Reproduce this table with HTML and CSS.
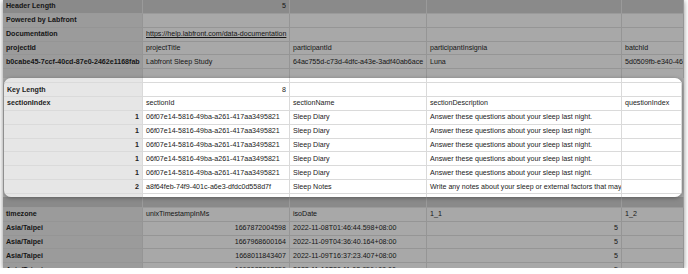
FILE: index.html
```html
<!DOCTYPE html>
<html>
<head>
<meta charset="utf-8">
<link rel="stylesheet" href="styles.css">
</head>
<body>
<div class="sheet">
  <div class="dim">
    <div class="row dark"><div class="c">Header Length</div><div class="c num">5</div><div class="c"></div><div class="c"></div><div class="c"></div></div>
    <div class="row"><div class="c">Powered by Labfront</div><div class="c"></div><div class="c"></div><div class="c"></div><div class="c"></div></div>
    <div class="row"><div class="c">Documentation</div><div class="c"><span class="link">https://help.labfront.com/data-documentation</span></div><div class="c"></div><div class="c"></div><div class="c"></div></div>
    <div class="row"><div class="c">projectId</div><div class="c">projectTitle</div><div class="c">participantId</div><div class="c">participantInsignia</div><div class="c">batchId</div></div>
    <div class="row"><div class="c">b0cabe45-7ccf-40cd-87e0-2462e1168fab</div><div class="c">Labfront Sleep Study</div><div class="c">64ac755d-c73d-4dfc-a43e-3adf40ab6ace</div><div class="c">Luna</div><div class="c">5d0509fb-e340-46</div></div>
    <div class="row split-top"><div class="c"></div><div class="c"></div><div class="c"></div><div class="c"></div><div class="c"></div></div>
  </div>

  <div class="card">
    <div class="row split-bottom"><div class="c"></div><div class="c"></div><div class="c"></div><div class="c"></div><div class="c"></div></div>
    <div class="row"><div class="c">Key Length</div><div class="c num">8</div><div class="c"></div><div class="c"></div><div class="c"></div></div>
    <div class="row"><div class="c">sectionIndex</div><div class="c">sectionId</div><div class="c">sectionName</div><div class="c">sectionDescription</div><div class="c">questionIndex</div></div>
    <div class="row"><div class="c num">1</div><div class="c">06f07e14-5816-49ba-a261-417aa3495821</div><div class="c">Sleep Diary</div><div class="c">Answer these questions about your sleep last night.</div><div class="c"></div></div>
    <div class="row"><div class="c num">1</div><div class="c">06f07e14-5816-49ba-a261-417aa3495821</div><div class="c">Sleep Diary</div><div class="c">Answer these questions about your sleep last night.</div><div class="c"></div></div>
    <div class="row"><div class="c num">1</div><div class="c">06f07e14-5816-49ba-a261-417aa3495821</div><div class="c">Sleep Diary</div><div class="c">Answer these questions about your sleep last night.</div><div class="c"></div></div>
    <div class="row"><div class="c num">1</div><div class="c">06f07e14-5816-49ba-a261-417aa3495821</div><div class="c">Sleep Diary</div><div class="c">Answer these questions about your sleep last night.</div><div class="c"></div></div>
    <div class="row"><div class="c num">1</div><div class="c">06f07e14-5816-49ba-a261-417aa3495821</div><div class="c">Sleep Diary</div><div class="c">Answer these questions about your sleep last night.</div><div class="c"></div></div>
    <div class="row"><div class="c num">2</div><div class="c">a8f64feb-74f9-401c-a6e3-dfdc0d558d7f</div><div class="c">Sleep Notes</div><div class="c">Write any notes about your sleep or external factors that may have affected it.</div><div class="c"></div></div>
    <div class="row split-tail"><div class="c"></div><div class="c"></div><div class="c"></div><div class="c"></div><div class="c"></div></div>
  </div>

  <div class="dim">
    <div class="row dark split-dark"><div class="c"></div><div class="c"></div><div class="c"></div><div class="c"></div><div class="c"></div></div>
    <div class="row"><div class="c">timezone</div><div class="c">unixTimestampInMs</div><div class="c">isoDate</div><div class="c">1_1</div><div class="c">1_2</div></div>
    <div class="row"><div class="c">Asia/Taipei</div><div class="c num">1667872004598</div><div class="c">2022-11-08T01:46:44.598+08:00</div><div class="c num">5</div><div class="c"></div></div>
    <div class="row"><div class="c">Asia/Taipei</div><div class="c num">1667968600164</div><div class="c">2022-11-09T04:36:40.164+08:00</div><div class="c num">5</div><div class="c"></div></div>
    <div class="row"><div class="c">Asia/Taipei</div><div class="c num">1668011843407</div><div class="c">2022-11-09T16:37:23.407+08:00</div><div class="c num">5</div><div class="c"></div></div>
    <div class="row"><div class="c">Asia/Taipei</div><div class="c num">1668082262856</div><div class="c">2022-11-10T20:11:02.856+08:00</div><div class="c num">5</div><div class="c"></div></div>
  </div>
</div>
</body>
</html>
```

FILE: styles.css
```css
html, body {
  margin: 0;
  background: #ffffff;
}

body {
  font-family: "Liberation Sans", Arial, sans-serif;
  font-size: 7.1px;
}

.sheet {
  margin-left: 3px;
  width: 681px;
  height: 268px;
  overflow: hidden;
  background: #a7a7a7;
  box-shadow: 0 1px 5px rgba(0, 0, 0, 0.45);
}

.dim {
  --cell: #a8a8a8;
  --colA: #9b9b9b;
  --line: #959595;
  --ink: #151515;
}

.dark {
  --cell: #8a8a8a;
  --colA: #8a8a8a;
  --line: #9a9a9a;
}

.row {
  display: grid;
  grid-template-columns: 140px 147px 137px 195px 1fr;
  height: 13.87px;
}

.c {
  box-sizing: border-box;
  min-width: 0;
  display: flex;
  align-items: center;
  padding: 0 3px;
  white-space: nowrap;
  overflow: hidden;
  background: var(--cell);
  color: var(--ink);
  border-right: 1px solid var(--line);
  border-bottom: 1px solid var(--line);
}

.c:first-child {
  background: var(--colA);
  font-weight: bold;
}

.num {
  justify-content: flex-end;
}

.link {
  text-decoration: underline;
}

.split-top {
  height: 8.65px;
}

.split-top .c {
  border-bottom: none;
}

.card {
  --cell: #ffffff;
  --colA: #e6e6e6;
  --line: #dadada;
  --ink: #222222;
  position: relative;
  z-index: 1;
  margin: 0 2px 0 1px;
  border-radius: 7px;
  overflow: hidden;
  box-shadow: 0 1px 4px rgba(0, 0, 0, 0.35);
}

.card .row {
  grid-template-columns: 139px 147px 137px 195px 1fr;
}

.card .split-bottom {
  height: 5.2px;
}

.card .split-tail {
  height: 2.8px;
}

.split-tail .c {
  border-bottom: none;
}

.split-dark {
  height: 11px;
}
```
